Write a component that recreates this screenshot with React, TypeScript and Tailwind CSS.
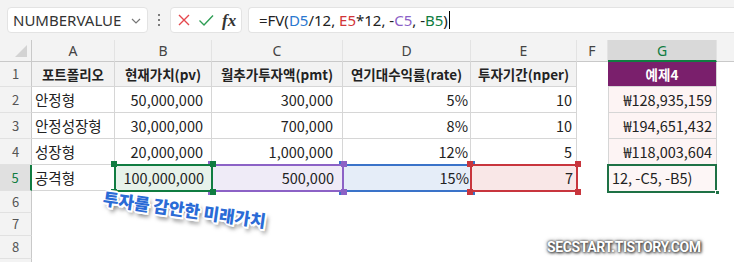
import React from "react";

const cjk = "font-['Noto_Sans_CJK_KR','Noto_Sans',sans-serif]";

function Sel({ border, square }: { border: string; square: string }) {
  return (
    <>
      <div className={"pointer-events-none absolute -left-px -top-px -right-px -bottom-px border-2 " + border} />
      <div className={"absolute -left-[4px] -top-[4px] h-[6px] w-[6px] " + square} />
      <div className={"absolute -right-[4px] -top-[4px] h-[6px] w-[6px] " + square} />
      <div className={"absolute -left-[4px] -bottom-[4px] h-[6px] w-[6px] " + square} />
      <div className={"absolute -right-[4px] -bottom-[4px] h-[6px] w-[6px] " + square} />
    </>
  );
}

function RowHead({ n, h, active }: { n: string; h: string; active?: boolean }) {
  return (
    <div
      className={
        "flex w-[32px] shrink-0 items-center justify-center border-b border-[#e1e1e1] text-[13px] " +
        h +
        (active
          ? " border-r-2 border-r-[#107c41] bg-[#e0e0e0] text-[#107c41]"
          : " border-r border-r-[#c9c9c9] bg-[#f3f3f3] text-[#555]")
      }
    >
      {n}
    </div>
  );
}

export default function App() {
  const grid = "border-[#d6d6d6]";
  return (
    <div className="relative h-[262px] w-[734px] overflow-hidden bg-white font-['Noto_Sans',sans-serif] text-[#222]">
      {/* Top bar */}
      <div className="flex h-[40px] items-start gap-0 bg-[#f3f3f3] pl-[7px] pt-[7px]">
        <div className="flex h-[26px] w-[141px] items-center justify-between rounded-[4px] border border-[#e3e3e3] bg-white pl-[5px] pr-[6px]">
          <span className="text-[15px] leading-none text-[#333]">NUMBERVALUE</span>
          <svg width="10" height="6" viewBox="0 0 10 6" className="mt-[2px]">
            <path d="M1 1 L5 5 L9 1" fill="none" stroke="#777" strokeWidth="1.2" />
          </svg>
        </div>
        <div className="flex h-[26px] w-[22px] flex-col items-center justify-center gap-[3px]">
          <div className="h-[2px] w-[2px] rounded-full bg-[#555]" />
          <div className="h-[2px] w-[2px] rounded-full bg-[#555]" />
          <div className="h-[2px] w-[2px] rounded-full bg-[#555]" />
        </div>
        <div className="flex h-[26px] w-[72px] items-center rounded-[4px] border border-[#e3e3e3] bg-white pl-[5px]">
          <svg width="14" height="14" viewBox="0 0 14 14" className="ml-[1px]">
            <path d="M2 2 L12 12 M12 2 L2 12" stroke="#e5484d" strokeWidth="1.4" />
          </svg>
          <svg width="16" height="14" viewBox="0 0 16 14" className="ml-[7px]">
            <path d="M1.5 7.5 L6 12 L15 2.5" fill="none" stroke="#2f9e55" strokeWidth="1.4" />
          </svg>
          <span className="ml-[8px] font-['Liberation_Serif',serif] text-[17px] font-bold italic leading-none text-[#333]">
            fx
          </span>
        </div>
        <div className="ml-[6px] flex h-[26px] flex-1 items-center rounded-l-[4px] border border-r-0 border-[#e3e3e3] bg-white pl-[10px]">
          <span className="text-[15px] leading-none text-[#222]">
            =FV(<span className="text-[#2a78d0]">D5</span>/12, <span className="text-[#d13438]">E5</span>*12, -
            <span className="text-[#8b5fc7]">C5</span>, -<span className="text-[#107c41]">B5</span>)
          </span>
          <div className="ml-[1px] h-[18px] w-px bg-black" />
        </div>
      </div>

      {/* Column header */}
      <div className="flex h-[22px] bg-[#f3f3f3] text-[14px] text-[#444]">
        <div className="relative w-[32px] shrink-0 border-b border-r border-[#c9c9c9]">
          <svg width="12" height="12" viewBox="0 0 12 12" className="absolute left-[15px] top-[5px]">
            <path d="M12 0 L12 12 L0 12 Z" fill="#d3d3d3" />
          </svg>
        </div>
        <div className="flex w-[83px] shrink-0 items-center justify-center border-b border-r border-b-[#c9c9c9] border-r-[#e3e3e3]">A</div>
        <div className="flex w-[97px] shrink-0 items-center justify-center border-b border-r border-b-[#c9c9c9] border-r-[#e3e3e3]">B</div>
        <div className="flex w-[131px] shrink-0 items-center justify-center border-b border-r border-b-[#c9c9c9] border-r-[#e3e3e3]">C</div>
        <div className="flex w-[128px] shrink-0 items-center justify-center border-b border-r border-b-[#c9c9c9] border-r-[#e3e3e3]">D</div>
        <div className="flex w-[106px] shrink-0 items-center justify-center border-b border-r border-b-[#c9c9c9] border-r-[#e3e3e3]">E</div>
        <div className="flex w-[31px] shrink-0 items-center justify-center border-b border-r border-b-[#c9c9c9] border-r-[#e3e3e3]">F</div>
        <div className="flex w-[109px] shrink-0 items-center justify-center border-b-2 border-r border-b-[#107c41] border-r-[#e3e3e3] bg-[#d9d9d9] text-[#107c41]">G</div>
        <div className="flex-1 border-b border-[#c9c9c9]" />
      </div>

      {/* Rows */}
      <div className={"flex flex-col " + cjk}>
        {/* Row 1 */}
        <div className="flex h-[25px]">
          <RowHead n="1" h="h-[25px]" />
          <div className={"flex w-[83px] shrink-0 items-center justify-center border-b border-r bg-[#f2f2f2] text-[13.5px] font-bold " + grid}>포트폴리오</div>
          <div className={"flex w-[97px] shrink-0 items-center justify-center border-b border-r bg-[#f2f2f2] text-[13.5px] font-bold " + grid}>현재가치(pv)</div>
          <div className={"flex w-[131px] shrink-0 items-center justify-center border-b border-r bg-[#f2f2f2] text-[13.5px] font-bold " + grid}>월추가투자액(pmt)</div>
          <div className={"flex w-[128px] shrink-0 items-center justify-center border-b border-r bg-[#f2f2f2] text-[13.5px] font-bold " + grid}>연기대수익률(rate)</div>
          <div className={"flex w-[106px] shrink-0 items-center justify-center border-b border-r bg-[#f2f2f2] text-[13.5px] font-bold " + grid}>투자기간(nper)</div>
          <div className="w-[31px] shrink-0" />
          <div className="flex w-[109px] shrink-0 items-center justify-center border-b border-r border-[#d6d6d6] bg-[#7a1f6c] text-[13.5px] font-bold text-white">예제4</div>
          <div className="flex-1" />
        </div>

        {[
          ["2", "안정형", "50,000,000", "300,000", "5%", "10", "₩128,935,159"],
          ["3", "안정성장형", "30,000,000", "700,000", "8%", "10", "₩194,651,432"],
          ["4", "성장형", "20,000,000", "1,000,000", "12%", "5", "₩118,003,604"],
        ].map((r) => (
          <div key={r[0]} className="flex h-[26px] text-[14.5px]">
            <RowHead n={r[0]} h="h-[26px]" />
            <div className={"flex w-[83px] shrink-0 items-center border-b border-r pl-[3px] " + grid}>{r[1]}</div>
            <div className={"flex w-[97px] shrink-0 items-center justify-end border-b border-r pr-[8px] " + grid}>{r[2]}</div>
            <div className={"flex w-[131px] shrink-0 items-center justify-end border-b border-r pr-[9px] " + grid}>{r[3]}</div>
            <div className={"flex w-[128px] shrink-0 items-center justify-end border-b border-r pr-[2px] " + grid}>{r[4]}</div>
            <div className={"flex w-[106px] shrink-0 items-center justify-end border-b border-r pr-[4px] " + grid}>{r[5]}</div>
            <div className="w-[31px] shrink-0" />
            <div className={"flex w-[109px] shrink-0 items-center justify-end border-b border-l border-r bg-[#fdf4f4] pr-[4px] " + grid}>{r[6]}</div>
            <div className="flex-1" />
          </div>
        ))}

        {/* Row 5 */}
        <div className="flex h-[26px] text-[14.5px]">
          <RowHead n="5" h="h-[26px]" active />
          <div className={"flex w-[83px] shrink-0 items-center border-b border-r pl-[3px] " + grid}>공격형</div>
          <div className="relative z-30 flex w-[97px] shrink-0 items-center justify-end bg-[#e7f2ea] pr-[8px]">
            <Sel border="border-[#107c41]" square="bg-[#107c41]" />
            100,000,000
          </div>
          <div className="relative z-20 flex w-[131px] shrink-0 items-center justify-end bg-[#efebf7] pr-[9px]">
            <Sel border="border-[#8c62c6]" square="bg-[#8c62c6]" />
            500,000
          </div>
          <div className="relative z-10 flex w-[128px] shrink-0 items-center justify-end bg-[#e5edf8] pr-[2px]">
            <Sel border="border-[#3a73c9]" square="bg-[#3a73c9]" />
            15%
          </div>
          <div className="relative z-20 flex w-[106px] shrink-0 items-center justify-end bg-[#f9e7e7] pr-[4px]">
            <Sel border="border-[#c8353d]" square="bg-[#c8353d]" />
            7
          </div>
          <div className="w-[31px] shrink-0" />
          <div className="relative flex w-[109px] shrink-0 items-center bg-[#fdf6f6] pl-[4px]">
            <div className="pointer-events-none absolute -left-[1px] -top-px -right-0 -bottom-[2px] border-2 border-[#1e7145]" />
            <div className="absolute -right-[3px] -bottom-[4px] h-[5px] w-[5px] border border-white bg-[#1e7145]" />
            12, -C5, -B5)
          </div>
          <div className="flex-1" />
        </div>

        <div className="flex h-[22px]">
          <RowHead n="6" h="h-[22px]" />
        </div>
        <div className="flex h-[23px]">
          <RowHead n="7" h="h-[23px]" />
        </div>
        <div className="flex h-[23px]">
          <RowHead n="8" h="h-[23px]" />
        </div>
        <div className="flex h-[23px]">
          <RowHead n="" h="h-[23px]" />
        </div>
      </div>

      {/* Annotation */}
      <div
        className={
          "absolute left-[105px] top-[185px] z-40 origin-top-left rotate-[8deg] whitespace-nowrap text-[17px] font-black text-[#2a6bd6] " +
          cjk +
          " [text-shadow:1px_0_0_#fff,-1px_0_0_#fff,0_1px_0_#fff,0_-1px_0_#fff,1px_1px_0_#fff,-1px_-1px_0_#fff,1px_-1px_0_#fff,-1px_1px_0_#fff,2px_0_0_#fff,0_2px_0_#fff,-2px_0_0_#fff,0_-2px_0_#fff,2px_2px_0_#fff,3px_4px_4px_rgba(0,0,0,0.6)]"
        }
      >
        투자를 감안한 미래가치
      </div>

      {/* Watermark */}
      <div className="absolute left-[547px] top-[237px] z-40 font-['Roboto',sans-serif] text-[14px] font-bold tracking-[-0.4px] text-white [text-shadow:0_0_2px_#444,1px_1px_3px_#333,0_0_4px_#666]">
        SECSTART.TISTORY.COM
      </div>
    </div>
  );
}
